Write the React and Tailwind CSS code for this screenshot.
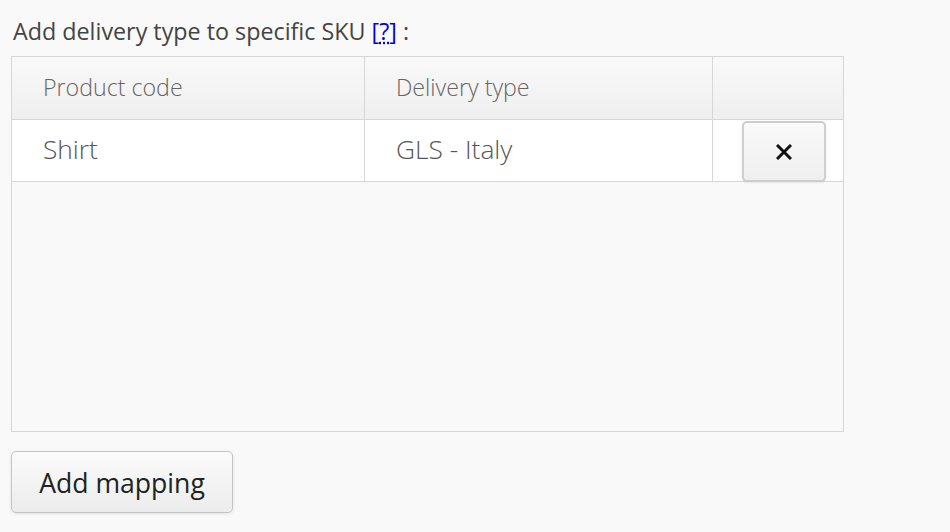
export default function App() {
  return (
    <div className="min-h-[532px] w-[950px] bg-[#f9f9f9] pl-[11px] pt-[14px]" style={{ fontFamily: '"Open Sans", sans-serif' }}>
      <div className="pl-[2px] text-[23.3px] leading-[34px] text-[#444]">
        Add delivery type to specific SKU{" "}
        <span className="text-[#00e]">[<span className="underline decoration-dotted underline-offset-2">?</span>]</span> :
      </div>
      <div className="mt-[8px] flex h-[376px] w-[833px] flex-col border border-[#d6d6d6] bg-[#f9f9f9]">
        <div className="flex h-[63px] border-b border-[#d6d6d6] bg-gradient-to-b from-[#f9f9f9] to-[#efefef] text-[23.2px] font-light text-[#666]">
          <div className="flex w-[353px] items-center border-r border-[#d6d6d6] pl-[31px] pb-[2px]">Product code</div>
          <div className="flex w-[348px] items-center border-r border-[#d6d6d6] pl-[31px] pb-[2px]">Delivery type</div>
          <div className="flex-1" />
        </div>
        <div className="flex h-[62px] border-b border-[#d6d6d6] bg-white text-[26.3px] font-light text-[#555]">
          <div className="flex w-[353px] items-center border-r border-[#d6d6d6] pl-[31px] pb-[1px]">Shirt</div>
          <div className="flex w-[348px] items-center border-r border-[#d6d6d6] pl-[31px] pb-[1px]">GLS - Italy</div>
          <div className="flex flex-1 items-start justify-end pr-[17px] pt-[1px]">
            <button className="relative z-10 flex h-[61px] w-[84px] items-center justify-center rounded-[5px] border-2 border-[#cdcdcd] bg-gradient-to-b from-[#f9f9f9] to-[#efefef] shadow-[0_1px_2px_rgba(0,0,0,0.08)]">
              <svg width="16" height="16" viewBox="0 0 16 16">
                <path d="M1 1 L15 15 M15 1 L1 15" stroke="#111" strokeWidth="3" strokeLinecap="butt" />
              </svg>
            </button>
          </div>
        </div>
        <div className="flex-1" />
      </div>
      <button className="mt-[19px] flex h-[62px] w-[222px] items-center justify-center rounded-[5px] border border-[#c4c4c4] bg-gradient-to-b from-[#fbfbfb] to-[#ececec] pt-[3px] text-[26.6px] text-[#222] shadow-[0_1px_3px_rgba(0,0,0,0.1)]">
        Add mapping
      </button>
    </div>
  );
}
